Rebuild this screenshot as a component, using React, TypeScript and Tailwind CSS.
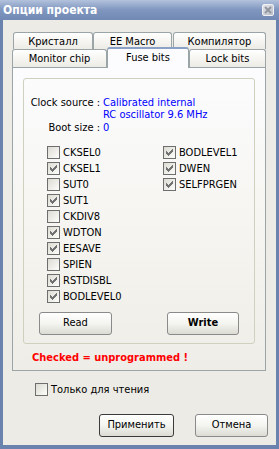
import React from "react";

const F = { fontFamily: '"DejaVu Sans Condensed", "DejaVu Sans", "Liberation Sans", sans-serif' };

function Box({ checked }: { checked?: boolean }) {
  return (
    <span className="w-[13px] h-[13px] border border-[#6e6e6e] bg-gradient-to-br from-[#dcdbd3] to-[#fdfdfb] flex items-center justify-center shrink-0">
      {checked && (
        <svg width="7" height="7" viewBox="0 0 7 7" shapeRendering="crispEdges">
          <path d="M6 0h1v3h-1v1h-1v1h-1v1h-1v1h-1v-1h-1v-1h-1v-3h1v1h1v1h1v-1h1v-1h1z" fill="#727272" />
        </svg>
      )}
    </span>
  );
}

function Check({ label, checked }: { label: string; checked?: boolean }) {
  return (
    <div className="h-[16px] flex items-start">
      <Box checked={checked} />
      <span className="ml-[3px] leading-[13px]">{label}</span>
    </div>
  );
}

function Btn({ children, w, bold, def }: { children: React.ReactNode; w: string; bold?: boolean; def?: boolean }) {
  return (
    <div
      className={`${w} h-[23px] rounded-[3px] border ${def ? "border-[#3b3b3b]" : "border-[#8a8a8a]"} bg-gradient-to-b from-[#ffffff] via-[#f4f4f0] to-[#dcdcd4] flex items-center justify-center ${bold ? "font-bold" : ""}`}
    >
      {children}
    </div>
  );
}

function Tab({ label, w, cls = "" }: { label: string; w: string; cls?: string }) {
  return (
    <div
      className={`${w} h-full rounded-t-[3px] border border-b-0 border-[#9ba5a8] bg-gradient-to-b from-[#ffffff] to-[#ecebe5] flex items-center justify-center leading-[13px] ${cls}`}
    >
      {label}
    </div>
  );
}

export default function App() {
  const col1: [string, boolean][] = [
    ["CKSEL0", false],
    ["CKSEL1", true],
    ["SUT0", false],
    ["SUT1", true],
    ["CKDIV8", false],
    ["WDTON", true],
    ["EESAVE", true],
    ["SPIEN", false],
    ["RSTDISBL", true],
    ["BODLEVEL0", true],
  ];
  const col2: [string, boolean][] = [
    ["BODLEVEL1", true],
    ["DWEN", true],
    ["SELFPRGEN", true],
  ];
  return (
    <div className="w-[279px] h-[449px] flex flex-col bg-[#6a83ae] text-[11px] text-black" style={F}>
      {/* Title bar */}
      <div className="h-[20px] shrink-0 flex items-center bg-gradient-to-b from-[#b3c2dc] via-[#7f96bf] to-[#7089b4] px-[3px]">
        <span className="text-white font-bold text-[12px] leading-[14px] flex-1" style={{ fontFamily: '"DejaVu Sans Condensed", "DejaVu Sans", sans-serif' }}>
          Опции проекта
        </span>
        <div className="w-[12px] h-[12px] mr-[2px] rounded-[2px] border border-[#eef0f4] bg-gradient-to-br from-[#e4e6ea] to-[#b9bdc6] flex items-center justify-center">
          <svg width="8" height="8" viewBox="0 0 8 8">
            <path d="M1 1L7 7M7 1L1 7" stroke="#8f949e" strokeWidth="1.8" />
          </svg>
        </div>
      </div>
      {/* Client */}
      <div className="flex-1 mx-[3px] mb-[4px] bg-[#ecebe5] flex flex-col">
        <div className="ml-[9px] mt-[12px] w-[254px] flex flex-col">
          <div className="h-[17px] flex">
            <Tab label="Кристалл" w="w-[80px]" cls="ml-[1px]" />
            <Tab label="EE Macro" w="w-[79px]" cls="ml-[0px]" />
            <Tab label="Компилятор" w="w-[93px]" cls="ml-[1px]" />
          </div>
          <div className="h-[18px] flex items-end">
            <Tab label="Monitor chip" w="w-[95px]" />
            <div className="relative top-[1px] z-10 w-[82px] h-[21px] rounded-t-[3px] border-x border-[#9ba5a8] border-t-2 border-t-[#8aa0c6] bg-[#fcfcfe] flex items-start justify-center pt-[2px] leading-[13px]">
              Fuse bits
            </div>
            <Tab label="Lock bits" w="w-[77px]" />
          </div>
          <div className="h-[304px] border border-[#9ba5a8] bg-gradient-to-b from-[#fcfcfe] via-[#f6f5f1] to-[#eeede7] flex flex-col">
            <div className="mx-[10px] mt-[10px] h-[266px] border border-[#d0d0bf] rounded-[3px] flex flex-col">
              <div className="mt-[18px] flex leading-[12px]">
                <div className="w-[76px] text-right">
                  <div>Clock source :</div>
                  <div className="h-[12px]" />
                  <div className="mt-[1px]">Boot size :</div>
                </div>
                <div className="ml-[3px] text-[#0000ff]">
                  <div>Calibrated internal</div>
                  <div>RC oscillator 9.6 MHz</div>
                  <div className="mt-[1px]">0</div>
                </div>
              </div>
              <div className="mt-[12px] flex pl-[23px]">
                <div className="w-[116px] flex flex-col">
                  {col1.map(([l, c]) => (
                    <Check key={l} label={l} checked={c} />
                  ))}
                </div>
                <div className="flex flex-col">
                  {col2.map(([l, c]) => (
                    <Check key={l} label={l} checked={c} />
                  ))}
                </div>
              </div>
              <div className="mt-[6px] flex pl-[15px]">
                <Btn w="w-[73px]">Read</Btn>
                <div className="w-[55px]" />
                <Btn w="w-[72px]" bold>
                  Write
                </Btn>
              </div>
            </div>
            <div className="mt-[7px] ml-[19px] text-[#ff0000] font-bold leading-[13px]">Checked = unprogrammed !</div>
          </div>
        </div>
        <div className="mt-[12px] ml-[32px] flex items-center h-[13px]">
          <Box />
          <span className="ml-[3px] leading-[13px]">Только для чтения</span>
        </div>
        <div className="mt-[18px] flex pl-[96px]">
          <Btn w="w-[75px]" def>
            Применить
          </Btn>
          <div className="w-[21px]" />
          <Btn w="w-[73px]">Отмена</Btn>
        </div>
      </div>
    </div>
  );
}
